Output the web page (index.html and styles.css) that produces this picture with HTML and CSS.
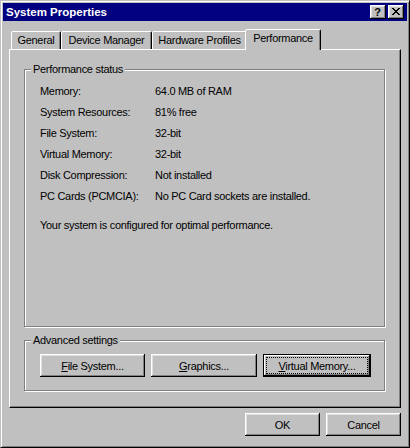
FILE: index.html
```
<!DOCTYPE html>
<html>
<head>
<meta charset="utf-8">
<title>System Properties</title>
<link rel="stylesheet" href="styles.css">
</head>
<body>
<div class="window">
  <div class="titlebar">
    <span class="title">System Properties</span>
    <div class="caption-buttons">
      <span class="cap-btn help">?</span>
      <span class="cap-btn close">
        <svg width="8" height="7" viewBox="0 0 8 7" shape-rendering="crispEdges"><path fill="#000" d="M0 0h2v1h-2zM6 0h2v1h-2zM1 1h2v1h-2zM5 1h2v1h-2zM2 2h4v1h-4zM3 3h2v1h-2zM2 4h4v1h-4zM1 5h2v1h-2zM5 5h2v1h-2zM0 6h2v1h-2zM6 6h2v1h-2z"/></svg>
      </span>
    </div>
  </div>

  <div class="tabs">
    <div class="tab w-general">General</div>
    <div class="tab w-device">Device Manager</div>
    <div class="tab w-hardware">Hardware Profiles</div>
    <div class="tab selected w-perf">Performance</div>
  </div>

  <div class="panel">
    <fieldset class="group grow">
      <legend>Performance status</legend>
      <div class="status">
        <div class="grid">
          <span>Memory:</span><span>64.0 MB of RAM</span>
          <span>System Resources:</span><span>81% free</span>
          <span>File System:</span><span>32-bit</span>
          <span>Virtual Memory:</span><span>32-bit</span>
          <span>Disk Compression:</span><span>Not installed</span>
          <span>PC Cards (PCMCIA):</span><span>No PC Card sockets are installed.</span>
        </div>
        <p class="summary">Your system is configured for optimal performance.</p>
      </div>
    </fieldset>

    <fieldset class="group advanced">
      <legend>Advanced settings</legend>
      <div class="adv-buttons">
        <button class="btn w-file"><u>F</u>ile System...</button>
        <button class="btn w-graphics"><u>G</u>raphics...</button>
        <button class="btn default w-vm"><u>V</u>irtual Memory...</button>
      </div>
    </fieldset>
  </div>

  <div class="dialog-buttons">
    <button class="btn w-dlg">OK</button>
    <button class="btn w-dlg">Cancel</button>
  </div>
</div>
</body>
</html>
```
FILE: styles.css
```
* {
  box-sizing: border-box;
}

html,
body {
  margin: 0;
  padding: 0;
}

body {
  background: #c0c0c0;
  font-family: "Liberation Sans", Arial, sans-serif;
  font-size: 11px;
  letter-spacing: -0.3px;
  color: #000;
}

.window {
  width: 410px;
  height: 448px;
  display: flex;
  flex-direction: column;
  background: #c0c0c0;
  border: 1px solid;
  border-color: #c0c0c0 #000 #000 #c0c0c0;
  box-shadow: inset 1px 1px #fff, inset -1px -1px #808080;
  padding: 2px;
}

/* Title bar */
.titlebar {
  flex: 0 0 18px;
  height: 18px;
  background: #000080;
  color: #fff;
  display: flex;
  align-items: center;
  justify-content: space-between;
  padding: 0 3px 0 3px;
}

.title {
  font-weight: bold;
  font-size: 11.5px;
  letter-spacing: 0;
  line-height: 18px;
}

.caption-buttons {
  display: flex;
  gap: 2px;
}

.cap-btn {
  width: 16px;
  height: 14px;
  background: #c0c0c0;
  box-shadow: inset -1px -1px #000, inset 1px 1px #fff, inset -2px -2px #808080, inset 2px 2px #dfdfdf;
  display: flex;
  align-items: center;
  justify-content: center;
  color: #000;
}

.help {
  font-weight: bold;
  font-size: 11px;
  letter-spacing: 0;
  line-height: 14px;
  padding-right: 1px;
}

.close svg {
  display: block;
  margin-left: -1px;
  margin-top: -1px;
}

/* Tabs */
.tabs {
  flex: 0 0 21px;
  display: flex;
  align-items: flex-end;
  height: 21px;
  margin: 8px 6px -1px 6px;
  padding-left: 2px;
  position: relative;
  z-index: 1;
}

.tab {
  height: 18px;
  margin-bottom: 1px;
  background: #c0c0c0;
  border: 1px solid;
  border-bottom: 0;
  border-color: #fff #000 transparent #fff;
  border-radius: 2px 2px 0 0;
  box-shadow: inset -1px 0 #808080;
  text-align: center;
  line-height: 16px;
  white-space: nowrap;
}

.tab.selected {
  height: 21px;
  margin: 0 -2px 0 -2px;
  z-index: 2;
}

.w-general { width: 50px; }
.w-device { width: 91px; }
.w-hardware { width: 95px; }
.w-perf { width: 76px; }

/* Tab page */
.panel {
  flex: 1;
  display: flex;
  flex-direction: column;
  margin: 0 6px;
  border: 1px solid;
  border-color: #fff #000 #000 #fff;
  box-shadow: inset -1px -1px #808080;
  padding: 13px 15px 16px 14px;
}

.group {
  margin: 0;
  padding: 0;
  min-width: 0;
  border: 1px solid #808080;
  box-shadow: inset 1px 1px #fff, 1px 1px #fff;
}

.group legend {
  margin-left: 6px;
  padding: 0 2px;
  line-height: 13px;
  background: #c0c0c0;
}

.group.grow {
  flex: 1;
}

.status {
  padding: 5px 0 0 15px;
}

.grid {
  display: grid;
  grid-template-columns: 115px auto;
  grid-auto-rows: 21px;
  line-height: 21px;
}

.summary {
  margin: 8px 0 0;
  line-height: 21px;
}

.advanced {
  margin-top: 7px;
}

.adv-buttons {
  display: flex;
  gap: 6px;
  padding: 7px 0 13px 15px;
}

/* Buttons */
.btn {
  font: inherit;
  letter-spacing: inherit;
  color: #000;
  background: #c0c0c0;
  border: 0;
  padding: 0;
  height: 23px;
  box-shadow: inset -1px -1px #000, inset 1px 1px #fff, inset -2px -2px #808080, inset 2px 2px #dfdfdf;
}

.btn.default {
  box-shadow: inset -2px -2px #000, inset 1px 1px #000, inset 2px 2px #fff, inset -3px -3px #808080;
  outline: 1px dotted #000;
  outline-offset: -4px;
}

.w-file { width: 105px; }
.w-graphics { width: 106px; }
.w-vm { width: 108px; }
.w-dlg { width: 75px; }

.dialog-buttons {
  flex: 0 0 auto;
  display: flex;
  justify-content: flex-end;
  gap: 6px;
  margin: 5px 6px 9px;
}
```
